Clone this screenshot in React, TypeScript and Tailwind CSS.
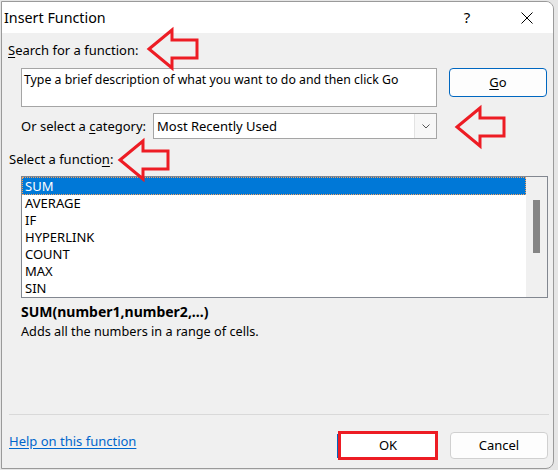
import React from "react";

const functions = ["SUM", "AVERAGE", "IF", "HYPERLINK", "COUNT", "MAX", "SIN"];

function Arrow({ tipX, tipY, headX, headHalf, shaftHalf, tailX }: { tipX: number; tipY: number; headX: number; headHalf: number; shaftHalf: number; tailX: number }) {
  const pts = [
    [tipX, tipY],
    [headX, tipY - headHalf],
    [headX, tipY - shaftHalf],
    [tailX, tipY - shaftHalf],
    [tailX, tipY + shaftHalf],
    [headX, tipY + shaftHalf],
    [headX, tipY + headHalf],
  ]
    .map(p => p.join(","))
    .join(" ");
  return <polygon points={pts} fill="none" stroke="#ed1c24" strokeWidth={3} strokeLinejoin="miter" />;
}

export default function App() {
  return (
    <div className="w-[558px] h-[470px] bg-[#e6e6e6] pl-px pt-px relative overflow-hidden" style={{ fontFamily: '"Noto Sans", sans-serif' }}>
      <div className="w-[553px] h-[468px] border border-[#9a9a9a] rounded-tr-[8px] rounded-br-[8px] overflow-hidden bg-[#f0f0f0] flex flex-col text-[13px] leading-[17px] text-black">
        {/* title bar */}
        <div className="h-[31px] bg-white flex items-center shrink-0">
          <span className="pl-[2px] text-[14.3px]">Insert Function</span>
          <div className="flex-1" />
          <div className="w-[46px] h-full flex items-center justify-center text-[15px]">?</div>
          <div className="w-[14px]" />
          <div className="w-[46px] h-full flex items-center justify-center">
            <svg width="12" height="12" viewBox="0 0 12 12">
              <path d="M0.5 0.5 L11.5 11.5 M11.5 0.5 L0.5 11.5" stroke="#000" strokeWidth="1" />
            </svg>
          </div>
          <div className="w-[3px]" />
        </div>

        {/* search */}
        <div className="mt-[9px] h-[17px] pl-[6px]">
          <span className="underline underline-offset-2">S</span>earch for a function:
        </div>
        <div className="mt-[9px] flex items-start pl-[19px]">
          <div className="w-[416px] h-[39px] bg-white border border-[#a5a5a5] pl-[2px] pt-[2px] whitespace-nowrap text-[12.3px]">
            Type a brief description of what you want to do and then click Go
          </div>
          <button className="ml-[12px] w-[98px] h-[29px] bg-[#fdfdfd] border border-[#0067c0] rounded-[4px] text-center">
            <span className="underline underline-offset-2">G</span>o
          </button>
        </div>

        {/* category */}
        <div className="mt-[6px] h-[26px] flex items-center pl-[19px]">
          <span className="w-[132px]">
            Or select a <span className="underline underline-offset-2">c</span>ategory:
          </span>
          <div className="w-[284px] h-[26px] bg-white border border-[#a5a5a5] flex items-center">
            <span className="flex-1 pl-[3px]">Most Recently Used</span>
            <div className="w-[22px] h-full bg-[#f7f7f7] border-l border-[#e3e3e3] flex items-center justify-center">
              <svg width="8" height="5" viewBox="0 0 8 5">
                <path d="M0.5 0.5 L4 4 L7.5 0.5" fill="none" stroke="#555" strokeWidth="1" />
              </svg>
            </div>
          </div>
        </div>

        {/* function list */}
        <div className="mt-[12px] h-[17px] pl-[7px]">
          Select a functio<span className="underline underline-offset-2">n</span>:
        </div>
        <div className="mt-[8px] ml-[19px] w-[527px] h-[122px] border border-[#828790] bg-white flex">
          <div className="flex-1 flex flex-col">
            {functions.map((f, i) => (
              <div
                key={f}
                className={
                  i === 0
                    ? "h-[18px] pl-[2px] bg-[#0078d7] text-white border border-dotted border-[#f4a261] leading-[16px]"
                    : "h-[17px] pl-[3px]"
                }
              >
                {f}
              </div>
            ))}
          </div>
          <div className="w-[21px] h-full bg-[#f0f0f0] flex justify-center">
            <div className="w-[7px] h-[53px] mt-[23px] bg-[#858585]" />
          </div>
        </div>

        <div className="mt-[5px] h-[17px] pl-[19px] font-bold text-[14px]">SUM(number1,number2,...)</div>
        <div className="mt-[3px] h-[17px] pl-[19px] text-[12.7px]">Adds all the numbers in a range of cells.</div>

        <div className="flex-1" />
        <div className="ml-[7px] w-[540px] h-px bg-[#d9d9d9]" />

        {/* footer */}
        <div className="h-[53px] flex items-start pl-[7px] pr-[5px]">
          <span className="mt-[18px] text-[#0066cc] underline underline-offset-2">Help on this function</span>
          <div className="flex-1" />
          <div className="mt-[16px] flex items-center">
            <div className="w-px h-[24px] bg-[#0067c0]" />
            <button className="w-[100px] h-[29px] bg-white border-[3px] border-[#ed1c24] text-center">OK</button>
          </div>
          <button className="mt-[17px] ml-[12px] w-[98px] h-[27px] bg-[#fdfdfd] border border-[#d0d0d0] rounded-[4px] text-center">
            Cancel
          </button>
        </div>
      </div>

      {/* annotation arrows */}
      <svg className="absolute left-0 top-0 pointer-events-none" width="558" height="470">
        <Arrow tipX={149} tipY={49} headX={172} headHalf={19} shaftHalf={9} tailX={197} />
        <Arrow tipX={457} tipY={127} headX={480} headHalf={19} shaftHalf={9} tailX={504} />
        <Arrow tipX={120} tipY={160} headX={143} headHalf={19} shaftHalf={9} tailX={168} />
      </svg>
    </div>
  );
}
